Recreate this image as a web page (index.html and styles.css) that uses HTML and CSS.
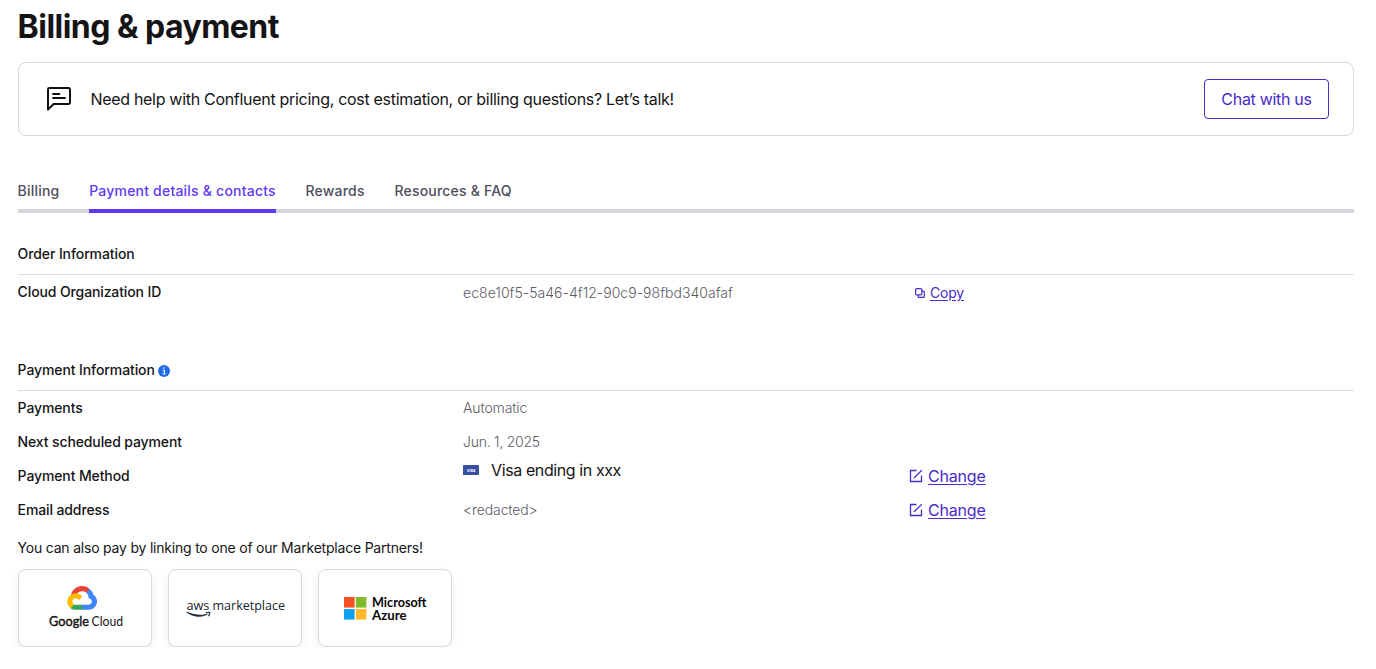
FILE: index.html
```html
<!DOCTYPE html>
<html lang="en">
<head>
<meta charset="utf-8">
<title>Billing &amp; payment</title>
<link rel="stylesheet" href="styles.css">
</head>
<body>
<main class="page">
  <h1 class="title">Billing &amp; payment</h1>

  <section class="help">
    <svg class="help-icon" viewBox="0 0 26 26" fill="none" stroke="#101112" stroke-width="2" stroke-linejoin="round" stroke-linecap="round"><path d="M2 23.6V3.4Q2 2 3.4 2H22.6Q24 2 24 3.4V16.6Q24 18 22.6 18H7.6Z"/><path d="M7 8h6.5M7 12h12" stroke-width="1.8"/></svg>
    <p class="help-text">Need help with Confluent pricing, cost estimation, or billing questions? Let’s talk!</p>
    <button class="chat">Chat with us</button>
  </section>

  <nav class="tabs">
    <a class="tab">Billing</a>
    <a class="tab active">Payment details &amp; contacts</a>
    <a class="tab">Rewards</a>
    <a class="tab">Resources &amp; FAQ</a>
  </nav>

  <section class="block order">
    <h2 class="heading">Order Information</h2>
    <div class="row">
      <span class="label">Cloud Organization ID</span>
      <span class="value org-id">ec8e10f5-5a46-4f12-90c9-98fbd340afaf</span>
      <a class="copy"><svg class="copy-icon" viewBox="0 0 10 10" fill="none" stroke="#4a2bc8" stroke-width="1.2"><rect x=".6" y=".6" width="6.2" height="6.2" rx="1"/><path d="M7 3.2h1.3q1 0 1 1v4.2q0 1-1 1H4.2q-1 0-1-1V7"/></svg><span class="link">Copy</span></a>
    </div>
  </section>

  <section class="block">
    <h2 class="heading">Payment Information<svg class="info" viewBox="0 0 12 12"><circle cx="6" cy="6" r="6" fill="#1f6be8"/><path d="M4.8 5.2h1.5v3.6M4.6 9h3" stroke="#fff" stroke-width="1.1" fill="none"/><circle cx="6" cy="3" r=".8" fill="#fff"/></svg></h2>
    <div class="row"><span class="label">Payments</span><span class="value">Automatic</span></div>
    <div class="row"><span class="label">Next scheduled payment</span><span class="value date">Jun. 1, 2025</span></div>
    <div class="row">
      <span class="label">Payment Method</span>
      <span class="card"><svg class="visa" viewBox="0 0 16 10"><rect width="16" height="10" rx=".5" fill="#364fa3"/><text class="visa-text" x="3.8" y="6.6" textLength="8.8" lengthAdjust="spacingAndGlyphs">VISA</text></svg>Visa ending in xxx</span>
      <a class="change"><svg class="edit" viewBox="0 0 14 14" fill="none" stroke="#4a2bc8" stroke-width="1.3"><path d="M7.5 1.5H1.5V12.5H12.5V6.5M5 9L12.8 1.2"/></svg><span class="link">Change</span></a>
    </div>
    <div class="row">
      <span class="label">Email address</span>
      <span class="value">&lt;redacted&gt;</span>
      <a class="change"><svg class="edit" viewBox="0 0 14 14" fill="none" stroke="#4a2bc8" stroke-width="1.3"><path d="M7.5 1.5H1.5V12.5H12.5V6.5M5 9L12.8 1.2"/></svg><span class="link">Change</span></a>
    </div>
  </section>

  <p class="partners-text">You can also pay by linking to one of our Marketplace Partners!</p>
  <div class="partners">
    <div class="partner">
      <svg class="logo" viewBox="0 0 132 76">
        <g transform="translate(48.3 16) scale(.116)">
          <path fill="#ea4335" d="M170.252 56.819l22.253-22.253 1.483-9.37C153.437-11.677 88.976-7.496 52.42 33.92 42.267 45.423 34.734 59.764 30.717 74.573l7.97-1.123 44.505-7.34 3.436-3.513c19.797-21.742 53.27-24.667 76.128-6.168l7.496.39z"/>
          <path fill="#4285f4" d="M224.205 73.918a100.249 100.249 0 0 0-30.217-48.722l-31.232 31.232a55.515 55.515 0 0 1 20.379 44.037v5.544c15.35 0 27.797 12.445 27.797 27.796 0 15.352-12.446 27.485-27.797 27.485h-55.671l-5.466 5.934v33.34l5.466 5.231h55.67c39.93.311 72.553-31.494 72.864-71.424a72.303 72.303 0 0 0-31.793-60.453"/>
          <path fill="#34a853" d="M71.87 205.796h55.593V161.29H71.87a27.275 27.275 0 0 1-11.4-2.498l-7.887 2.42-22.409 22.253-1.952 7.574c12.567 9.489 27.9 14.825 43.647 14.757"/>
          <path fill="#fbbc05" d="M71.87 61.425C31.94 61.664-.237 94.228.001 134.158a72.301 72.301 0 0 0 28.222 56.88l32.248-32.246c-13.99-6.322-20.208-22.786-13.887-36.776 6.32-13.99 22.786-20.208 36.775-13.888a27.796 27.796 0 0 1 13.887 13.888l32.248-32.248A72.224 72.224 0 0 0 71.87 61.425"/>
        </g>
        <text class="google strong" x="30" y="56" textLength="40" lengthAdjust="spacingAndGlyphs">Google</text>
        <text class="google" x="72.6" y="56" textLength="31.5" lengthAdjust="spacingAndGlyphs">Cloud</text>
      </svg>
    </div>
    <div class="partner">
      <svg class="logo" viewBox="0 0 132 76">
        <text class="aws strong" x="17.4" y="39.5" textLength="23" lengthAdjust="spacingAndGlyphs">aws</text>
        <text class="aws" x="43.5" y="39.5" textLength="72.5" lengthAdjust="spacingAndGlyphs">marketplace</text>
        <path d="M17.6 42.1Q28 49.5 38.4 44.3Q28 46.9 17.6 42.1Z" fill="#161e2d" stroke="#161e2d" stroke-width=".7"/>
        <path d="M36.8 42.7Q41 41.7 40.8 42.7Q40.8 44.5 39.2 46.2" fill="none" stroke="#161e2d" stroke-width="1.1"/>
      </svg>
    </div>
    <div class="partner">
      <svg class="logo" viewBox="0 0 132 76">
        <path fill="#f25022" d="M25 27h10.6v10.6H25z"/><path fill="#7fba28" d="M36.8 27h10.6v10.6H36.8z"/>
        <path fill="#10a2ee" d="M25 39h10.6v10.6H25z"/><path fill="#ffb92a" d="M36.8 39h10.6v10.6H36.8z"/>
        <text class="azure" x="53" y="36.5" textLength="54.5" lengthAdjust="spacingAndGlyphs">Microsoft</text>
        <text class="azure" x="53" y="49.5" textLength="34.5" lengthAdjust="spacingAndGlyphs">Azure</text>
      </svg>
    </div>
  </div>
</main>
</body>
</html>
```

FILE: styles.css
```css
* { box-sizing: border-box; }
body { margin: 0; background: #fff; color: #141416; font-family: Inter, "Liberation Sans", sans-serif; }
h1, h2, p { margin: 0; }
.page { padding: 6px 22px 0 17.6px; }
.title { height: 56px; font-size: 32px; line-height: 42px; font-weight: 700; letter-spacing: -0.53px; }
.help { display: flex; align-items: center; height: 74px; padding: 0 24px 0 27px; border: 1px solid #d8d8de; border-radius: 8px; }
.help-icon { width: 26px; height: 26px; margin-right: 18.8px; }
.help-text { flex: 1; font-size: 16px; letter-spacing: -0.3px; white-space: nowrap; }
.chat { width: 125px; height: 40px; padding: 0; border: 1px solid #4a2bc8; border-radius: 4px; background: #fff; color: #4a2bc8; font: 16px Inter, sans-serif; letter-spacing: -0.3px; }
.tabs { display: flex; gap: 29.7px; height: 41px; margin-top: 36px; border-bottom: 4px solid #d6d6dc; }
.tab { height: 41px; font-size: 14px; line-height: 38px; font-weight: 500; letter-spacing: .21px; color: #4d4d5b; white-space: nowrap; }
.tab.active { color: #6039f5; border-bottom: 4px solid #6039f5; }
.block { margin-top: 41px; }
.block.order { margin-top: 21px; }
.heading { display: flex; align-items: center; height: 41px; padding-bottom: 2px; border-bottom: 1px solid #dddde3; font-size: 14px; font-weight: 500; letter-spacing: -0.1px; }
.info { width: 12px; height: 12px; margin: 3px 0 0 3px; }
.row { display: grid; grid-template-columns: repeat(3, 1fr); align-items: center; height: 34px; font-size: 14px; }
.label, .value { padding-bottom: 2px; letter-spacing: -0.12px; }
.label { font-weight: 500; }
.value { color: #5c5c68; font-weight: 300; }
.value.org-id { padding-bottom: 0; letter-spacing: .04px; }
.value.date { letter-spacing: -0.25px; }
.card { display: flex; align-items: center; height: 34px; padding-bottom: 12px; font-size: 16px; letter-spacing: -0.4px; }
.visa { width: 16px; height: 10px; margin-right: 12px; }
.visa-text { font: italic 700 4px Inter, sans-serif; letter-spacing: 0; fill: #fff; }
.copy, .change { display: flex; align-items: center; color: #4a2bc8; }
.copy { padding-left: 6px; letter-spacing: -0.2px; }
.copy-icon { width: 10px; height: 10px; margin: 1px 5.5px 0 0; }
.change { font-size: 16px; letter-spacing: -0.18px; }
.edit { width: 14px; height: 14px; margin-right: 5.4px; }
.link { text-decoration: underline; text-underline-offset: 2px; }
.partners-text { margin-top: 11px; height: 31px; font-size: 14px; line-height: 20px; letter-spacing: -0.21px; }
.partners { display: flex; gap: 16px; }
.partner { width: 134px; height: 78px; border: 1px solid #d8d8de; border-radius: 8px; box-shadow: 0 3px 8px rgba(0, 0, 0, .07); }
.logo { display: block; width: 132px; height: 76px; }
.google { font: 400 13px Lato, sans-serif; fill: #111; }
.google.strong { font-weight: 400; stroke: #111; stroke-width: .4px; }
.aws { font: 400 13.5px "Open Sans", sans-serif; fill: #161e2d; }
.aws.strong { font-weight: 500; }
.azure { font: 700 12.5px Lato, sans-serif; fill: #050505; }
```
